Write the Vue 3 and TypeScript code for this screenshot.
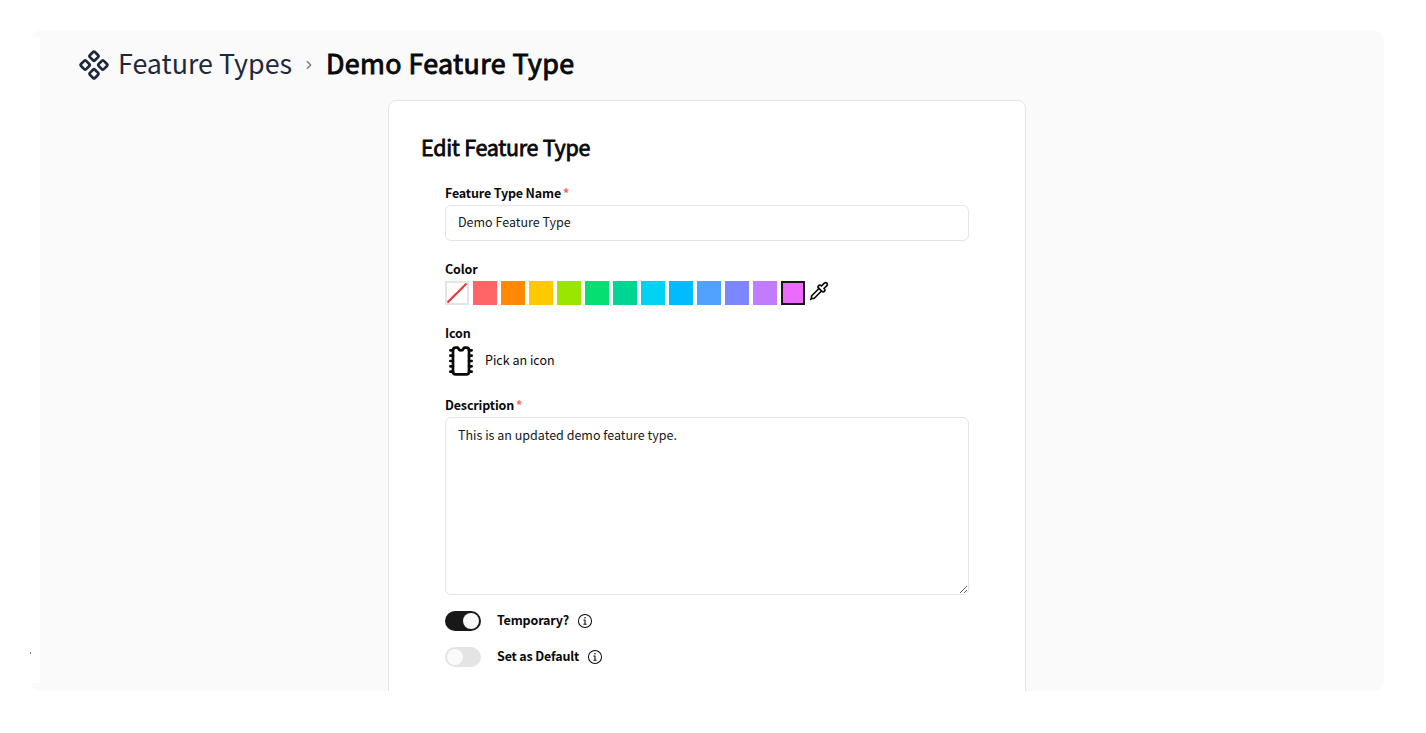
<script setup lang="ts">
import { ref } from 'vue'

const name = ref('Demo Feature Type')
const description = ref('This is an updated demo feature type.')
const swatches = [
  '#ff6467', '#ff8904', '#ffc800', '#9ae600', '#05df72', '#00d492',
  '#00d3f2', '#00bcff', '#51a2ff', '#7c86ff', '#c27aff', '#ed6aff',
]
const selected = ref('#ed6aff')
const toggles = ref([
  { label: 'Temporary?', cls: 'temporary', on: true },
  { label: 'Set as Default', cls: 'default', on: false },
])
</script>

<template>
  <div class="page">
    <div class="shell">
      <i class="strip"></i>
      <i class="speck"></i>
      <nav class="crumbs">
        <svg class="logo" viewBox="0 0 24 24">
          <path d="M15.536 11.293a1 1 0 0 0 0 1.414l2.376 2.377a1 1 0 0 0 1.414 0l2.377-2.377a1 1 0 0 0 0-1.414l-2.377-2.377a1 1 0 0 0-1.414 0z" />
          <path d="M2.297 11.293a1 1 0 0 0 0 1.414l2.377 2.377a1 1 0 0 0 1.414 0l2.377-2.377a1 1 0 0 0 0-1.414L6.088 8.916a1 1 0 0 0-1.414 0z" />
          <path d="M8.916 17.912a1 1 0 0 0 0 1.415l2.377 2.376a1 1 0 0 0 1.414 0l2.377-2.376a1 1 0 0 0 0-1.415l-2.377-2.376a1 1 0 0 0-1.414 0z" />
          <path d="M8.916 4.674a1 1 0 0 0 0 1.414l2.377 2.376a1 1 0 0 0 1.414 0l2.377-2.376a1 1 0 0 0 0-1.414l-2.377-2.377a1 1 0 0 0-1.414 0z" />
        </svg>
        <a class="parent">Feature Types</a>
        <svg class="chevron" viewBox="0 0 24 24"><path d="m9 18 6-6-6-6" /></svg>
        <span class="current">Demo Feature Type</span>
      </nav>

      <section class="card">
        <h2>Edit Feature Type</h2>
        <form class="form">
          <label class="label">Feature Type Name<span class="req">*</span></label>
          <input v-model="name" class="input" type="text" />

          <label class="label color-label">Color</label>
          <div class="swatches">
            <span class="swatch none">
              <svg viewBox="0 0 20 20"><path d="M0.5 19.5 19.5 0.5" /></svg>
            </span>
            <span
              v-for="c in swatches"
              :key="c"
              class="swatch"
              :class="{ selected: c === selected }"
              :style="{ backgroundColor: c }"
            ></span>
            <svg class="pipette" viewBox="0 0 24 24">
              <path d="m2 22 1-1h3l9-9" />
              <path d="M3 21v-3l9-9" />
              <path d="m15 6 3.4-3.4a2.1 2.1 0 1 1 3 3L18 9l.4.4a2.1 2.1 0 1 1-3 3l-3.8-3.8a2.1 2.1 0 1 1 3-3l.4.4Z" />
            </svg>
          </div>

          <label class="label icon-label">Icon</label>
          <div class="picker">
            <svg class="chip" viewBox="0 0 24 24">
              <path d="M18 12h2M18 16h2M18 20h2M18 4h2M18 8h2M4 12h2M4 16h2M4 20h2M4 4h2M4 8h2" />
              <path d="M8 2a2 2 0 0 0-2 2v16a2 2 0 0 0 2 2h8a2 2 0 0 0 2-2V4a2 2 0 0 0-2-2h-1.5c-.276 0-.494.227-.562.495a2 2 0 0 1-3.876 0C9.994 2.227 9.776 2 9.5 2z" />
            </svg>
            <span class="pick">Pick an icon</span>
          </div>

          <label class="label desc-label">Description<span class="req">*</span></label>
          <textarea v-model="description" class="area" spellcheck="false"></textarea>

          <div v-for="t in toggles" :key="t.cls" class="toggle-row">
            <span class="switch" :class="{ on: t.on }"><i></i></span>
            <span class="label toggle-label" :class="t.cls">{{ t.label }}</span>
            <svg class="info" viewBox="0 0 15 15">
              <path fill-rule="evenodd" d="M7.5.877a6.623 6.623 0 1 0 0 13.246A6.623 6.623 0 0 0 7.5.877ZM1.827 7.5a5.673 5.673 0 1 1 11.346 0 5.673 5.673 0 0 1-11.346 0ZM8.25 4.5a.75.75 0 1 1-1.5 0 .75.75 0 0 1 1.5 0ZM6 6h1.5a.5.5 0 0 1 .5.5V10h1v1H6v-1h1V7H6V6Z" />
            </svg>
          </div>
        </form>
      </section>
    </div>
  </div>
</template>

<style>
body {
  margin: 0;
  background: #fff;
  overflow: hidden;
}
</style>

<style scoped>
* {
  box-sizing: border-box;
}
.page {
  height: 733px;
  padding: 30px 42px 42px 30px;
  font-family: "Noto Sans CJK SC", "Noto Sans", sans-serif;
  color: #09090b;
}
.shell {
  position: relative;
  height: 661px;
  padding: 16px 0 0 48px;
  background: #fafafa;
  border-radius: 12px;
  overflow: hidden;
}
.strip {
  position: absolute;
  left: 0;
  top: 8px;
  width: 10px;
  height: 645px;
  background: #fff;
}
.speck {
  position: absolute;
  left: 0;
  top: 622px;
  width: 1px;
  height: 2px;
  background: #777;
}
svg {
  display: block;
  flex: none;
  fill: none;
  stroke: currentColor;
  stroke-width: 2;
  stroke-linecap: round;
  stroke-linejoin: round;
}
.crumbs {
  display: flex;
  align-items: center;
  height: 38px;
  font-size: 26.85px;
  line-height: 33px;
  white-space: nowrap;
}
.logo {
  width: 32px;
  height: 32px;
  margin-right: 8px;
  color: #1e293b;
}
.parent {
  width: 174px;
  height: 38px;
  color: #1e293b;
}
.chevron {
  width: 14px;
  height: 14px;
  margin: 0 10px;
  color: #71717a;
}
.current {
  height: 38px;
  font-weight: 400;
  letter-spacing: 0.38px;
  -webkit-text-stroke: 0.95px currentColor;
}
.card {
  width: 638px;
  height: 640px;
  margin: 16px 0 0 310px;
  padding: 31px 32px;
  background: #fff;
  border: 1px solid #e4e4e7;
  border-radius: 8px;
}
h2 {
  height: 32px;
  margin: 0;
  font-size: 21.45px;
  font-weight: 400;
  line-height: 30px;
  letter-spacing: -0.26px;
  -webkit-text-stroke: 0.8px currentColor;
}
.form {
  display: flex;
  flex-direction: column;
  padding: 22px 24px 0;
}
.label {
  height: 16px;
  font-size: 12.5px;
  font-weight: 600;
  line-height: 14px;
  letter-spacing: -0.16px;
  white-space: nowrap;
}
.req {
  margin-left: 2px;
  color: #ff6467;
}
.input,
.area {
  width: 524px;
  margin: 3px 0 0;
  border: 1px solid #e4e4e7;
  border-radius: 6px;
  outline: none;
  background: #fff;
  font: 12.5px/20px "Noto Sans CJK SC", "Noto Sans", sans-serif;
  color: #18181b;
}
.input {
  height: 36px;
  padding: 0 12px 3px;
}
.area {
  height: 178px;
  padding: 7px 12px;
  resize: vertical;
}
.color-label {
  margin-top: 21px;
}
.swatches {
  display: flex;
  gap: 4px;
  margin-top: 3px;
}
.swatch {
  width: 24px;
  height: 24px;
}
.swatch.none {
  border: 2px solid #e4e4e7;
}
.none svg {
  width: 20px;
  height: 20px;
  color: #fb2c36;
  stroke-linecap: butt;
}
.swatch.selected {
  border: 2px solid #18181b;
}
.pipette {
  width: 20px;
  height: 20px;
}
.icon-label {
  margin-top: 21px;
}
.picker {
  display: flex;
  align-items: center;
  gap: 8px;
  height: 32px;
  margin-top: 3px;
  font-size: 12.5px;
}
.chip {
  width: 32px;
  height: 32px;
}
.pick {
  height: 20px;
  line-height: 18px;
}
.desc-label {
  margin-top: 21px;
}
.toggle-row {
  display: flex;
  align-items: center;
  height: 20px;
  margin-top: 16px;
}
.switch {
  width: 36px;
  height: 20px;
  margin-right: 16px;
  padding: 2px;
  border-radius: 10px;
  background: #e4e4e7;
}
.switch.on {
  background: #18181b;
}
.switch i {
  display: block;
  width: 16px;
  height: 16px;
  border-radius: 50%;
  background: #fafafa;
}
.switch.on i {
  margin-left: 16px;
}
.toggle-label {
  margin-right: 8px;
}
.temporary {
  width: 72px;
}
.default {
  width: 82px;
}
.info {
  width: 16px;
  height: 16px;
  fill: currentColor;
  stroke: none;
}
</style>
